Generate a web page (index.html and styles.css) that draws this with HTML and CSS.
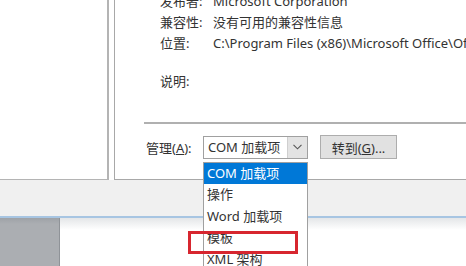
FILE: index.html
```html
<!DOCTYPE html>
<html lang="zh-CN">
<head>
  <meta charset="UTF-8" />
  <title>COM 加载项</title>
  <link rel="stylesheet" href="styles.css">
</head>
<body>
  <div class="main">
    <div class="nav-pane"></div>
    <div class="content-pane">
      <div class="details">
        <div class="detail-row"><span class="detail-label">发布者:</span><span>Microsoft Corporation</span></div>
        <div class="detail-row"><span class="detail-label">兼容性:</span><span>没有可用的兼容性信息</span></div>
        <div class="detail-row"><span class="detail-label">位置:</span><span>C:\Program Files (x86)\Microsoft Office\Office16\</span></div>
        <div class="detail-row detail-row-desc"><span class="detail-label">说明:</span></div>
      </div>
      <div class="separator"></div>
      <div class="manage-row">
        <span class="manage-label">管理(<u>A</u>):</span>
        <div class="combo">
          <span class="combo-value">COM 加载项</span>
          <span class="combo-arrow">
            <svg width="9" height="6" viewBox="0 0 9 6"><polyline points="0.5,0.8 4.5,4.8 8.5,0.8" fill="none" stroke="#555" stroke-width="1.1"/></svg>
          </span>
          <ul class="combo-list">
            <li class="combo-item combo-item-selected">COM 加载项</li>
            <li class="combo-item">操作</li>
            <li class="combo-item">Word 加载项</li>
            <li class="combo-item">模板</li>
            <li class="combo-item">XML 架构</li>
            <li class="combo-item">XML 扩展包</li>
            <li class="combo-item">禁用项目</li>
            <span class="mark-box"></span>
          </ul>
        </div>
        <button class="go-button">转到(<u>G</u>)...</button>
      </div>
    </div>
  </div>
  <div class="button-bar"></div>
  <div class="taskbar">
    <div class="taskbar-left"></div>
    <div class="taskbar-right"></div>
  </div>
</body>
</html>
```
FILE: styles.css
```css
html, body {
  margin: 0;
  width: 466px;
  height: 266px;
  overflow: hidden;
}

body {
  font-family: "Noto Sans", "Noto Sans CJK SC", sans-serif;
  font-size: 13px;
  color: #333;
  background: #fff;
}

.main {
  display: flex;
  height: 180px;
  background: #fff;
}

.nav-pane {
  width: 107px;
  border-right: 2px solid #b4b4b4;
  border-bottom: 1px solid #b4b4b4;
}

.content-pane {
  flex: 1;
  position: relative;
  margin-left: 5px;
  padding-left: 29px;
  border-left: 1px solid #a8a8a8;
  border-bottom: 1px solid #a8a8a8;
  min-width: 0;
}

.details {
  padding-left: 16px;
  margin-top: -9px;
}

.detail-row {
  display: flex;
  height: 21px;
  line-height: 21px;
  white-space: nowrap;
}

.detail-label {
  flex: none;
  width: 53px;
}

.detail-row-desc {
  margin-top: 17px;
}

.separator {
  height: 2px;
  margin-top: 30px;
  background: #b0b0b0;
}

.manage-row {
  display: flex;
  align-items: center;
  height: 24px;
  margin-top: 11px;
}

.manage-label {
  flex: none;
  width: 57px;
  margin-left: 2px;
}

.combo {
  position: relative;
  z-index: 10;
  display: flex;
  box-sizing: border-box;
  width: 105px;
  height: 23px;
  border: 1px solid #a0a0a0;
  background: #fff;
}

.combo-value {
  flex: 1;
  padding-left: 4px;
  line-height: 21px;
  white-space: nowrap;
}

.combo-arrow {
  display: flex;
  align-items: center;
  justify-content: center;
  width: 19px;
  background: #e3e3e3;
  border-left: 1px solid #cfcfcf;
}

.combo-list {
  position: absolute;
  left: -1px;
  top: 25px;
  box-sizing: border-box;
  width: 105px;
  margin: 0;
  padding: 0;
  list-style: none;
  background: #fff;
  border: 1px solid #a0a0a0;
}

.combo-item {
  height: 21.5px;
  line-height: 21.5px;
  padding-left: 3px;
  white-space: nowrap;
}

.combo-item-selected {
  background: #0078d7;
  color: #fff;
}

.mark-box {
  position: absolute;
  left: -16px;
  top: 68px;
  box-sizing: border-box;
  width: 110px;
  height: 23px;
  border: 3px solid #d7262f;
}

.go-button {
  flex: none;
  width: 77px;
  height: 24px;
  margin-left: 12px;
  padding: 0;
  font: inherit;
  color: #333;
  background: #e1e1e1;
  border: 1px solid #adadad;
}

.button-bar {
  height: 36px;
  background: #f0f0f0;
  border-bottom: 2px solid #a7c5e2;
}

.taskbar {
  display: flex;
  height: 48px;
}

.taskbar-left {
  width: 59px;
  background: linear-gradient(#9ea2a7, #abaeb2 6px);
  border-right: 1px solid #8f9398;
}

.taskbar-right {
  flex: 1;
  background: linear-gradient(#e4e6e8, #fff 12px);
}
```
